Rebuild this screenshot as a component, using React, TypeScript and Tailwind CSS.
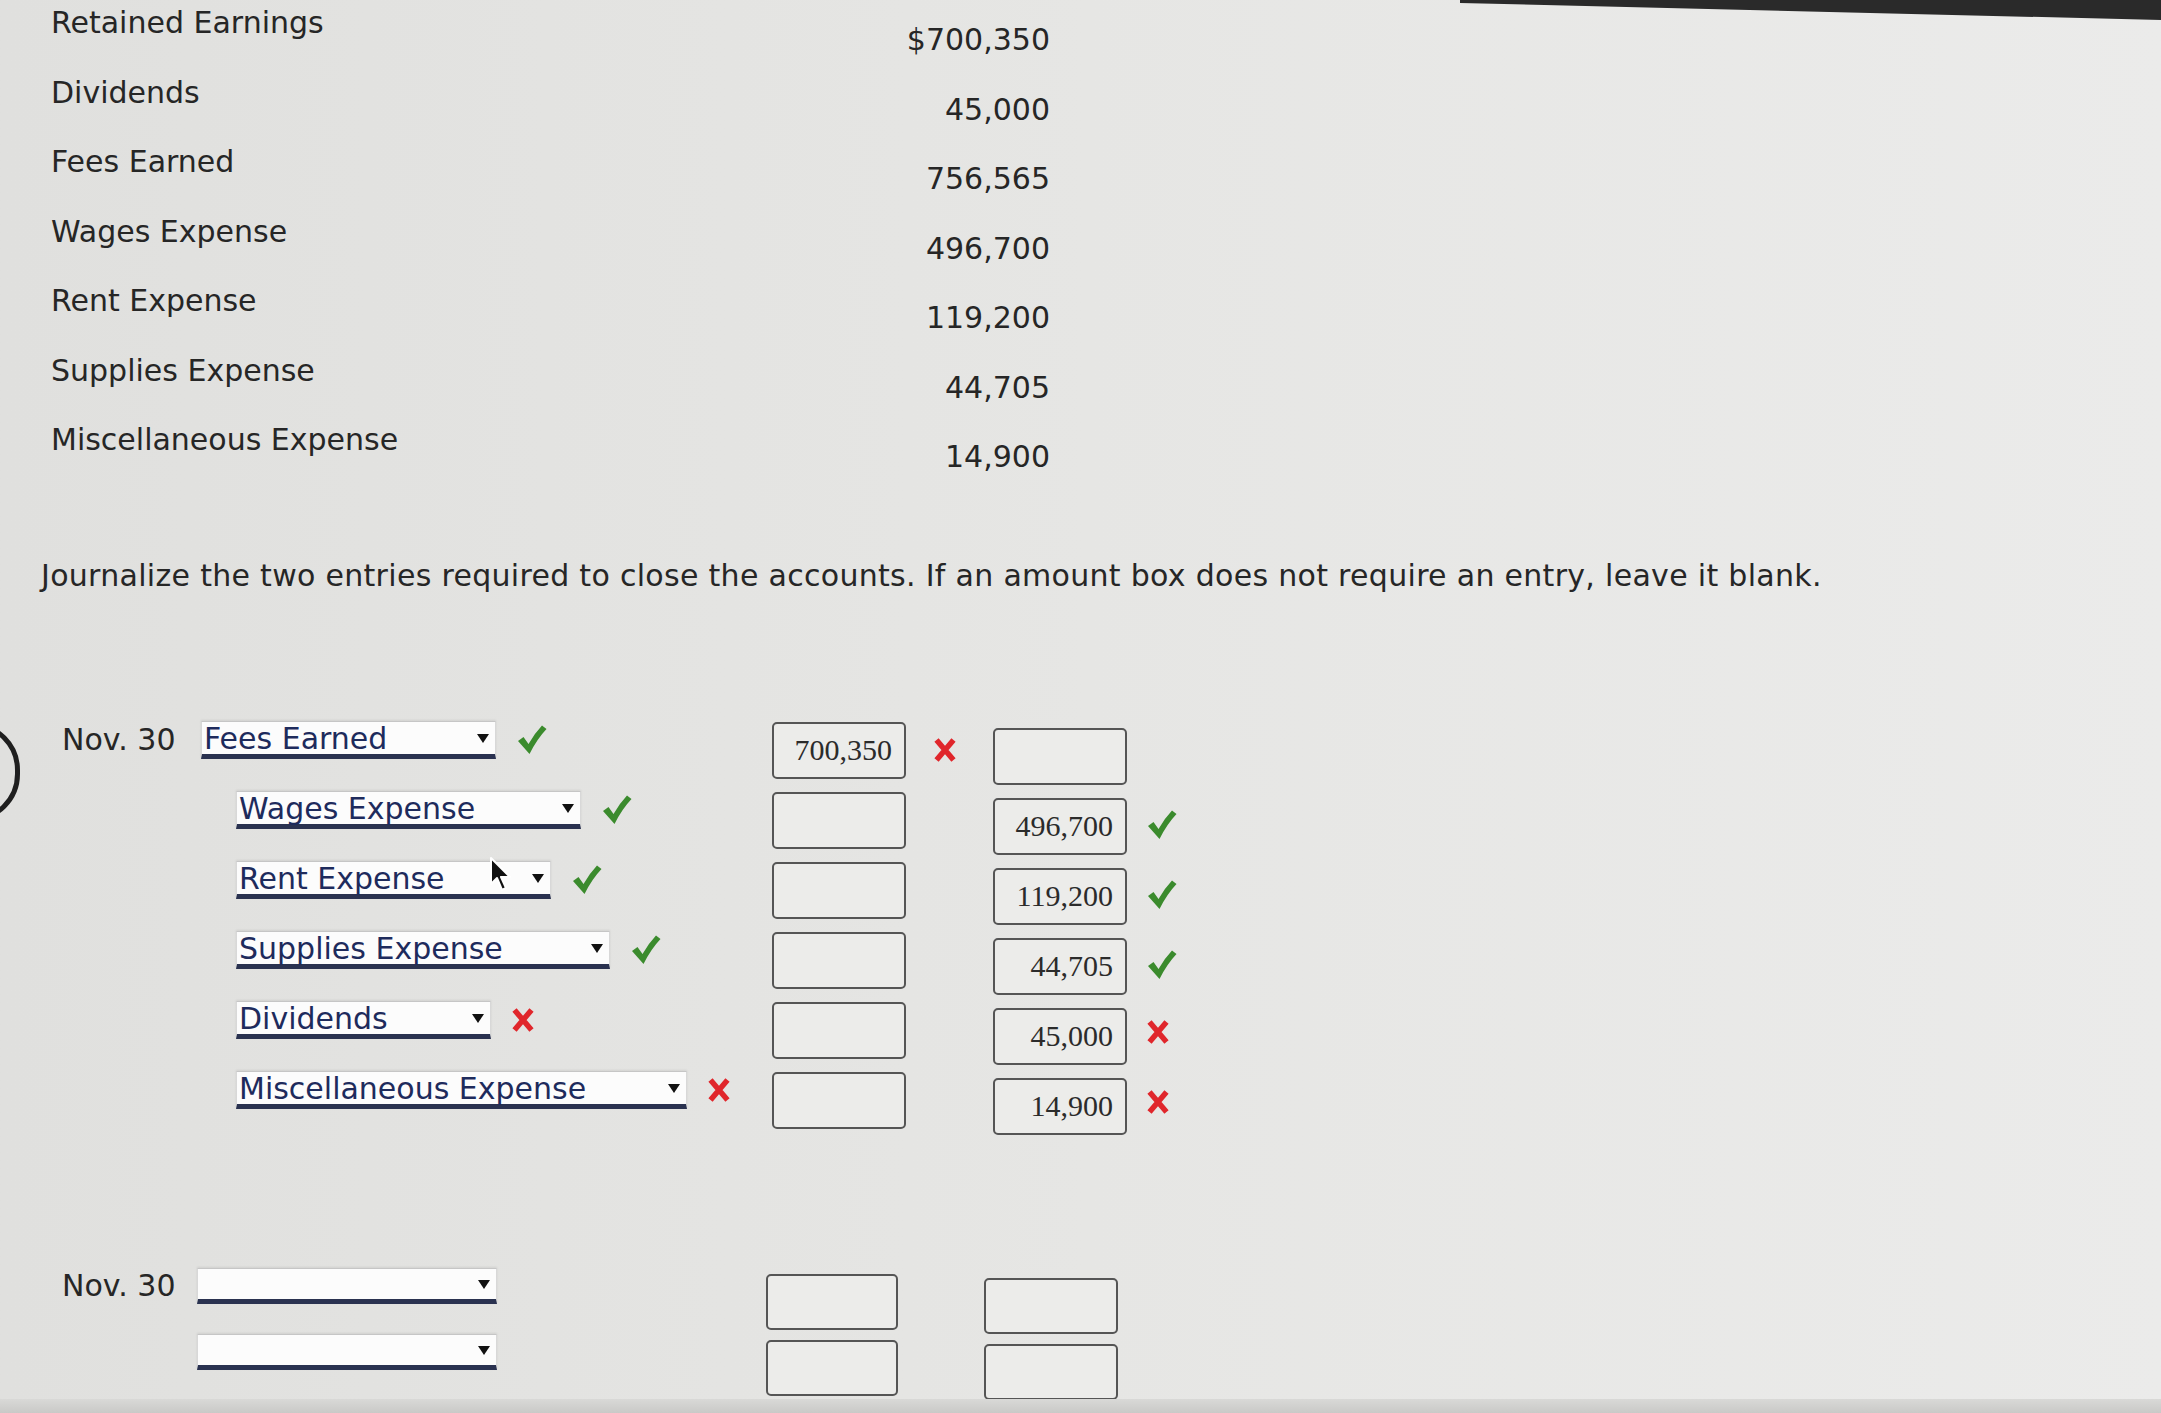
import React from "react";

type Mark = "check" | "x" | null;

const accounts: [string, string][] = [
  ["Retained Earnings", "$700,350"],
  ["Dividends", "45,000"],
  ["Fees Earned", "756,565"],
  ["Wages Expense", "496,700"],
  ["Rent Expense", "119,200"],
  ["Supplies Expense", "44,705"],
  ["Miscellaneous Expense", "14,900"],
];

type Row = {
  label: string;
  w: number;
  mark: Mark;
  debit: string;
  debitMark: Mark;
  credit: string;
  creditMark: Mark;
  cursor?: boolean;
};

const entry1: Row[] = [
  { label: "Fees Earned", w: 295, mark: "check", debit: "700,350", debitMark: "x", credit: "", creditMark: null },
  { label: "Wages Expense", w: 345, mark: "check", debit: "", debitMark: null, credit: "496,700", creditMark: "check" },
  { label: "Rent Expense", w: 315, mark: "check", debit: "", debitMark: null, credit: "119,200", creditMark: "check", cursor: true },
  { label: "Supplies Expense", w: 374, mark: "check", debit: "", debitMark: null, credit: "44,705", creditMark: "check" },
  { label: "Dividends", w: 255, mark: "x", debit: "", debitMark: null, credit: "45,000", creditMark: "x" },
  { label: "Miscellaneous Expense", w: 451, mark: "x", debit: "", debitMark: null, credit: "14,900", creditMark: "x" },
];

function Check() {
  return (
    <svg width="32" height="32" viewBox="0 0 32 32" className="block">
      <path d="M2 17 L7.5 13 L12.5 20 Q18 10 26 1.5 L30.5 5 Q21 15 13.5 30 Z" fill="#3b8b2d" />
    </svg>
  );
}

function XMark() {
  return (
    <svg width="24" height="26" viewBox="0 0 24 26" className="block">
      <path d="M3.5 3 L20.5 23 M20.5 3 L3.5 23" stroke="#e0262b" strokeWidth="5.5" strokeLinecap="butt" />
    </svg>
  );
}

function MarkIcon({ m }: { m: Mark }) {
  if (m === "check") return <Check />;
  if (m === "x") return <XMark />;
  return null;
}

function Cursor() {
  return (
    <svg width="24" height="38" viewBox="0 0 24 38" className="block">
      <path
        d="M2 2 L2 28 L8 22 L13 34 L17 32 L12 21 L21 21 Z"
        fill="#111"
        stroke="#fff"
        strokeWidth="2"
        strokeLinejoin="round"
      />
    </svg>
  );
}

function Select({ label, w, h, cursor }: { label: string; w: number; h: number; cursor?: boolean }) {
  return (
    <div
      className="relative flex items-center justify-between bg-[#fcfcfc] border-t border-x border-t-[#c6c6c6] border-x-[#d8d8d8] border-b-[5px] border-b-[#2a3250] pl-[2px] pr-[6px] shadow-[0_-1px_2px_rgba(0,0,0,0.08)]"
      style={{ width: w, height: h }}
    >
      <span className="text-[30px] leading-none text-[#1e2b5c] whitespace-nowrap mt-[3px]">{label}</span>
      <svg width="12" height="9" viewBox="0 0 12 9" className="block shrink-0 mt-[2px]">
        <path d="M0 0 L12 0 L6 9 Z" fill="#111" />
      </svg>
      {cursor && (
        <div className="absolute left-[252px] top-[-6px]">
          <Cursor />
        </div>
      )}
    </div>
  );
}

function Box({ value, w, h, mt }: { value: string; w: number; h: number; mt: number }) {
  return (
    <div
      className="flex items-center justify-end shrink-0 rounded-[5px] border-2 border-[#555] bg-[#ececea] pr-[12px] font-['Liberation_Serif',serif] text-[30px] text-[#2b2b2b] leading-none"
      style={{ width: w, height: h, marginTop: mt }}
    >
      {value}
    </div>
  );
}

export default function App() {
  return (
    <div className="relative w-[2161px] h-[1413px] overflow-hidden bg-gradient-to-r from-[#e0e0de] via-[#e6e6e4] to-[#ebebea] font-['DejaVu_Sans',sans-serif] text-[#262626]">
      {/* top dark screen edge */}
      <div className="absolute top-0 left-[1460px] w-[701px] h-[20px] bg-[#2a2a2a] [clip-path:polygon(0_0,100%_0,100%_100%,0_15%)]" />
      {/* partial circle at left */}
      <div className="absolute left-[-76px] top-[722px] w-[96px] h-[100px] rounded-full border-[5px] border-[#1f1f1f]" />
      {/* bottom screen edge */}
      <div className="absolute bottom-0 left-0 w-full h-[14px] bg-gradient-to-b from-[#d9d9d7] to-[#c9c9c7]" />

      {/* accounts table */}
      <div className="pt-[5px] pl-[51px]">
        {accounts.map(([label, amt]) => (
          <div key={label} className="flex h-[69.5px] text-[30px] leading-[36px]">
            <div className="w-[750px] whitespace-nowrap">{label}</div>
            <div className="w-[249px] text-right mt-[17px]">{amt}</div>
          </div>
        ))}
      </div>

      {/* instruction */}
      <div className="mt-[66px] pl-[41px] text-[30px] leading-[36px] whitespace-nowrap tracking-[0.3px]">
        Journalize the two entries required to close the accounts. If an amount box does not require an entry, leave it blank.
      </div>

      {/* entry 1 */}
      <div className="mt-[127px]">
        {entry1.map((r, i) => (
          <div key={r.label} className="flex items-start h-[70px] pl-[62px]">
            <div className="w-[710px] flex items-center h-[38px] shrink-0">
              {i === 0 ? (
                <div className="w-[139px] text-[30px] leading-none shrink-0">Nov. 30</div>
              ) : (
                <div className="w-[174px] shrink-0" />
              )}
              <Select label={r.label} w={r.w} h={38} cursor={r.cursor} />
              <div className="ml-[20px]">
                <MarkIcon m={r.mark} />
              </div>
            </div>
            <Box value={r.debit} w={134} h={57} mt={1} />
            <div className="w-[87px] shrink-0 pl-[27px] mt-[16px]">
              <MarkIcon m={r.debitMark} />
            </div>
            <Box value={r.credit} w={134} h={57} mt={7} />
            <div className="ml-[19px] mt-[18px]">
              <MarkIcon m={r.creditMark} />
            </div>
          </div>
        ))}
      </div>

      {/* entry 2 */}
      <div className="mt-[127px]">
        {[0, 1].map((i) => (
          <div key={i} className="flex items-start h-[66px] pl-[62px]">
            <div className="w-[704px] flex items-center h-[36px] shrink-0">
              <div className="w-[135px] text-[30px] leading-none shrink-0">{i === 0 ? "Nov. 30" : ""}</div>
              <Select label="" w={300} h={36} />
            </div>
            <Box value="" w={132} h={56} mt={6} />
            <div className="w-[86px] shrink-0" />
            <Box value="" w={134} h={56} mt={10} />
          </div>
        ))}
      </div>
    </div>
  );
}
